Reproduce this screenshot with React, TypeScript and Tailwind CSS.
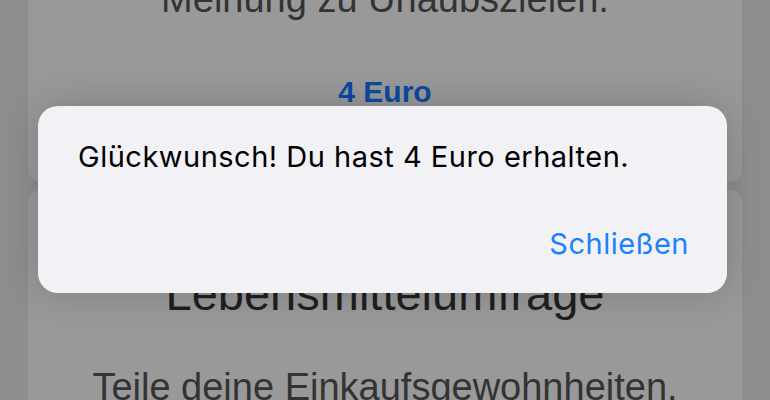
export default function App() {
  return (
    <div className="relative w-[770px] h-[400px] overflow-hidden bg-[#8e8e8e] font-['Liberation_Sans',Arial,sans-serif]">
      {/* page behind the dialog, dimmed */}
      <div className="mx-[28px] flex flex-col gap-[8px]">
        <div className="bg-[#999999] rounded-b-[12px] shadow-[0_1px_3px_rgba(0,0,0,0.05)] flex flex-col items-center pb-[75px]">
          <p className="-mt-[20px] text-[38px] leading-none text-[#333333] whitespace-nowrap">
            Meinung zu Urlaubszielen.
          </p>
          <p className="mt-[59px] text-[30px] leading-none font-bold text-[#0b4aa0]">4 Euro</p>
        </div>
        <div className="bg-[#999999] rounded-[12px] flex flex-col items-center pt-[80px] h-[420px]">
          <p className="text-[47px] leading-none text-[#1f1f1f] whitespace-nowrap">Lebensmittelumfrage</p>
          <p className="mt-[51px] text-[38px] leading-none text-[#333333] whitespace-nowrap">
            Teile deine Einkaufsgewohnheiten.
          </p>
        </div>
      </div>

      {/* alert */}
      <div className="absolute left-[38px] top-[106px] w-[689px] h-[187px] rounded-[20px] bg-[#f2f1f6] shadow-[0_0_40px_rgba(0,0,0,0.18)] flex flex-col pt-[36px] pl-[40px] pr-[38px] font-['Inter',sans-serif]">
        <p className="text-[29px] leading-none tracking-[0.5px] text-black whitespace-nowrap">
          Glückwunsch! Du hast 4 Euro erhalten.
        </p>
        <div className="mt-[58px] flex justify-end">
          <button className="text-[29px] leading-none tracking-[0.5px] text-[#1a82fb]">Schließen</button>
        </div>
      </div>
    </div>
  );
}
